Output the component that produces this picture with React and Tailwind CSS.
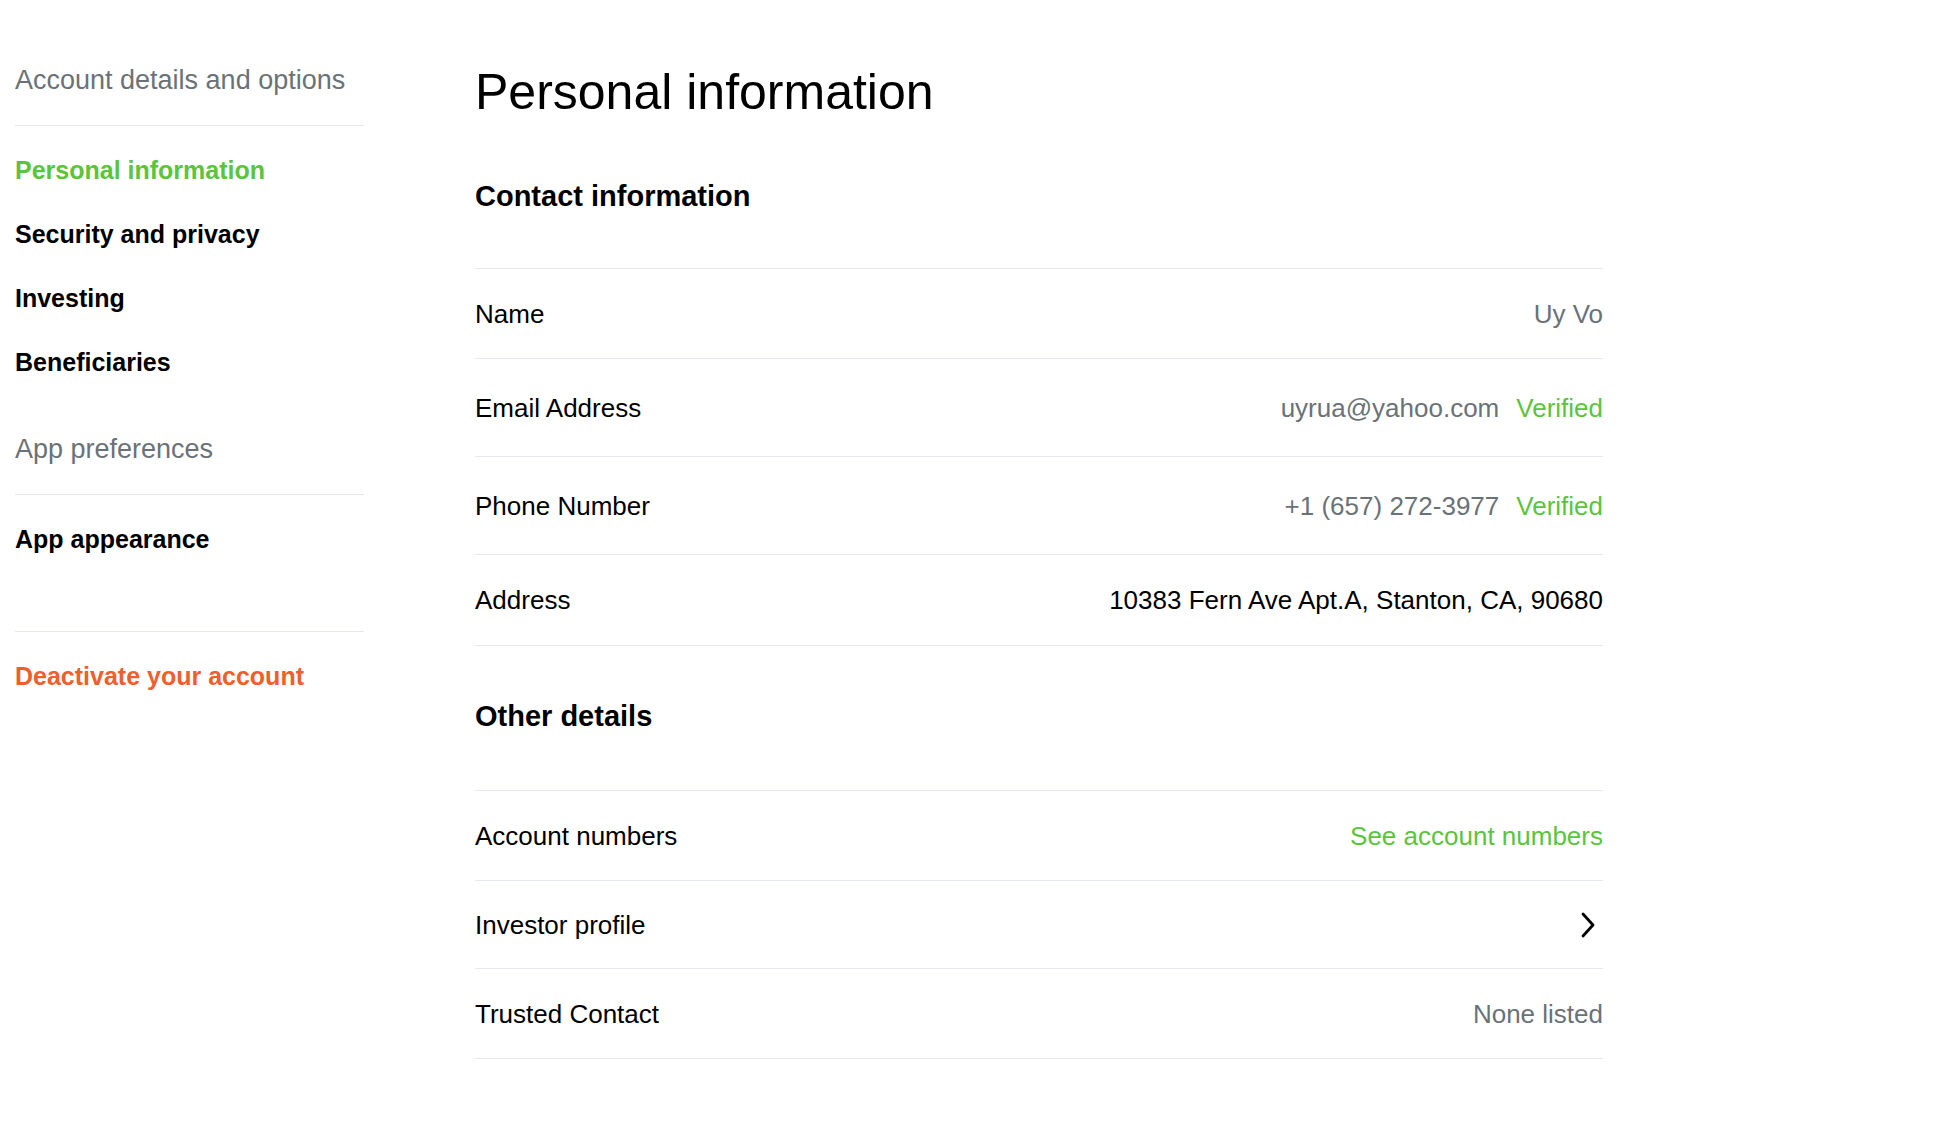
const contactRows = [
    { label: 'Name', value: 'Uy Vo', height: 'h-[90px]' },
    { label: 'Email Address', value: 'uyrua@yahoo.com', verified: true, height: 'h-[98px]' },
    { label: 'Phone Number', value: '+1 (657) 272-3977', verified: true, height: 'h-[98px]' },
    { label: 'Address', value: '10383 Fern Ave Apt.A, Stanton, CA, 90680', dark: true, height: 'h-[91px]' },
];

function SideLink({ children, active, danger }) {
    let color = 'text-black';
    if (active) color = 'text-[#5ac53b]';
    if (danger) color = 'text-[#ef5f2b]';
    return (
        <a href="#" className={`flex h-[64px] items-center text-[25px] font-bold leading-[30px] ${color}`}>
            {children}
        </a>
    );
}

function SideHeader({ children }) {
    return <div className="h-[32px] text-[27px] leading-[32px] text-[#6a7278]">{children}</div>;
}

function Row({ label, height, children }) {
    return (
        <div className={`flex ${height} items-center justify-between border-b border-[#e3e9ed]`}>
            <span className="text-[26px] leading-[30px] text-black">{label}</span>
            <div className="flex items-center gap-[17px] text-[26px] leading-[30px]">{children}</div>
        </div>
    );
}

function Chevron() {
    return (
        <svg width="16" height="26" viewBox="0 0 16 26" className="mr-[7px]" fill="none">
            <polyline points="3,2 13,13 3,24" stroke="black" strokeWidth="2.8" strokeLinecap="round" strokeLinejoin="round" />
        </svg>
    );
}

export default function App() {
    return (
        <div className="flex min-h-screen bg-white pl-[15px] font-['Liberation_Sans',Arial,sans-serif]">
            {/* Sidebar */}
            <aside className="w-[349px] shrink-0 pt-[64px]">
                <SideHeader>Account details and options</SideHeader>
                <div className="mt-[29px] border-t border-[#e3e9ed]" />
                <nav className="mt-[12px]">
                    <SideLink active>Personal information</SideLink>
                    <SideLink>Security and privacy</SideLink>
                    <SideLink>Investing</SideLink>
                    <SideLink>Beneficiaries</SideLink>
                </nav>
                <div className="mt-[39px]">
                    <SideHeader>App preferences</SideHeader>
                </div>
                <div className="mt-[29px] border-t border-[#e3e9ed]" />
                <nav className="mt-[12px]">
                    <SideLink>App appearance</SideLink>
                </nav>
                <div className="mt-[60px] border-t border-[#e3e9ed]" />
                <div className="mt-[12px]">
                    <SideLink danger>Deactivate your account</SideLink>
                </div>
            </aside>

            {/* Main */}
            <main className="ml-[111px] w-[1128px] pt-[64px]">
                <h1 className="h-[56px] text-[50px] leading-[56px] text-black">Personal information</h1>

                <h2 className="mt-[59px] h-[34px] text-[29px] font-bold leading-[34px] text-black">
                    Contact information
                </h2>
                <div className="mt-[55px] border-t border-[#e3e9ed]">
                    {contactRows.map((row) => (
                        <Row key={row.label} label={row.label} height={row.height}>
                            <span className={row.dark ? 'text-black' : 'text-[#6a7278]'}>{row.value}</span>
                            {row.verified && <span className="text-[#5ac53b]">Verified</span>}
                        </Row>
                    ))}
                </div>

                <h2 className="mt-[53px] h-[34px] text-[29px] font-bold leading-[34px] text-black">Other details</h2>
                <div className="mt-[57px] border-t border-[#e3e9ed]">
                    <Row label="Account numbers" height="h-[90px]">
                        <span className="text-[#5ac53b]">See account numbers</span>
                    </Row>
                    <Row label="Investor profile" height="h-[88px]">
                        <Chevron />
                    </Row>
                    <Row label="Trusted Contact" height="h-[90px]">
                        <span className="text-[#6a7278]">None listed</span>
                    </Row>
                </div>
            </main>
        </div>
    );
}
